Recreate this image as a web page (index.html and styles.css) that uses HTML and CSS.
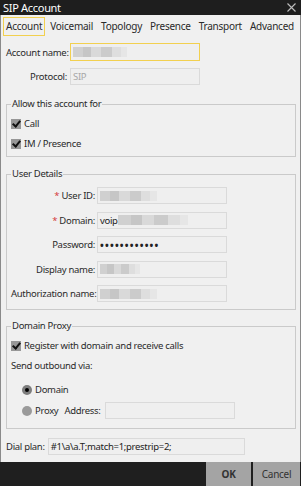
FILE: index.html
```html
<!DOCTYPE html>
<html lang="en">
<head>
  <meta charset="UTF-8">
  <title>SIP Account</title>
  <link rel="stylesheet" href="styles.css">
</head>
<body>
  <div class="window">
    <div class="titlebar">
      <span>SIP Account</span>
      <svg class="close" width="9" height="9" viewBox="0 0 9 9"><path d="M0.5 0.5L8.5 8.5M8.5 0.5L0.5 8.5" stroke="#bdbdbd" stroke-width="1.1"/></svg>
    </div>

    <div class="main">
      <nav class="tabs">
        <span class="tab active">Account</span>
        <span class="tab">Voicemail</span>
        <span class="tab">Topology</span>
        <span class="tab">Presence</span>
        <span class="tab">Transport</span>
        <span class="tab">Advanced</span>
      </nav>

      <div class="content">
        <div class="row">
          <label class="lbl lbl-top">Account name:</label>
          <div class="field focus"><span class="smudge sm-acc"></span></div>
        </div>
        <div class="row row-protocol">
          <label class="lbl lbl-top">Protocol:</label>
          <div class="field muted">SIP</div>
        </div>

        <fieldset class="group group-allow">
          <legend>Allow this account for</legend>
          <div class="check"><span class="box"></span>Call</div>
          <div class="check"><span class="box"></span>IM / Presence</div>
        </fieldset>

        <fieldset class="group group-user">
          <legend>User Details</legend>
          <div class="row">
            <label class="lbl lbl-user"><span class="req">*</span> User ID:</label>
            <div class="field"><span class="smudge sm-uid"></span></div>
          </div>
          <div class="row">
            <label class="lbl lbl-user"><span class="req">*</span> Domain:</label>
            <div class="field">voip<span class="smudge sm-dom"></span></div>
          </div>
          <div class="row">
            <label class="lbl lbl-user">Password:</label>
            <div class="field dots">••••••••••••</div>
          </div>
          <div class="row">
            <label class="lbl lbl-user">Display name:</label>
            <div class="field"><span class="smudge sm-disp"></span></div>
          </div>
          <div class="row">
            <label class="lbl lbl-user">Authorization name:</label>
            <div class="field"><span class="smudge sm-auth"></span></div>
          </div>
        </fieldset>

        <fieldset class="group group-proxy">
          <legend>Domain Proxy</legend>
          <div class="check"><span class="box"></span>Register with domain and receive calls</div>
          <div class="plain">Send outbound via:</div>
          <div class="radio-row radio-domain"><span class="radio on"></span>Domain</div>
          <div class="radio-row radio-proxy">
            <span class="radio"></span>Proxy
            <span class="addr">Address:</span>
            <div class="field"></div>
          </div>
        </fieldset>

        <div class="row row-dial">
          <label class="lbl">Dial plan:</label>
          <div class="field dial">#1\a\a.T;match=1;prestrip=2;</div>
        </div>
      </div>
    </div>

    <div class="footer">
      <button class="ok">OK</button>
      <button class="cancel">Cancel</button>
    </div>
  </div>
</body>
</html>
```

FILE: styles.css
```css
body {
  margin: 0;
  font-family: "Noto Sans", sans-serif;
  font-size: 9.5px;
  letter-spacing: -0.3px;
  color: #2a2a2a;
  background: #f0f0f0;
}

.window {
  width: 301px;
  height: 486px;
  display: flex;
  flex-direction: column;
  background: #f0f0f0;
}

.titlebar {
  height: 15px;
  background: #1e1e1e;
  color: #fff;
  font-size: 11px;
  display: flex;
  align-items: center;
  justify-content: space-between;
  padding: 0 5px 0 3px;
}
.close {
  display: block;
}

.main {
  flex: 1;
  border-left: 1px solid #8a8a8a;
  border-right: 1px solid #8a8a8a;
}

.tabs {
  display: flex;
  height: 22px;
  box-sizing: border-box;
  padding: 2px 0 0 2px;
  font-size: 10px;
  letter-spacing: -0.25px;
  gap: 2px;
  white-space: nowrap;
}
.tab {
  height: 19px;
  box-sizing: border-box;
  line-height: 17px;
  padding: 0 2px;
  border: 1px solid transparent;
}
.tab.active {
  border-color: #f2d04f;
}

.content {
  padding: 6px 4px 0 5px;
}

.row {
  display: flex;
  align-items: center;
  height: 18px;
}
.lbl {
  white-space: nowrap;
  margin-right: 3px;
}
.lbl-top {
  width: 61px;
  text-align: right;
}
.lbl-top:first-child {
  text-align: left;
}
.row-protocol {
  margin-top: 7px;
  height: 17px;
}
.row-protocol .lbl {
  text-align: right;
}

.field {
  width: 130px;
  height: 100%;
  box-sizing: border-box;
  border: 1px solid #dadada;
  background: #efefef;
  display: flex;
  align-items: center;
  padding-left: 2px;
  color: #222;
}
.field.focus {
  border-color: #f2d04f;
}
.field.muted {
  color: #a8a8a8;
}
.field.dots {
  letter-spacing: 1.2px;
  font-size: 10px;
  font-weight: bold;
}

.smudge {
  height: 10px;
  background: linear-gradient(90deg, #d0d0d0 0 18%, #c6c6c6 18% 34%, #d9d9d9 34% 52%, #cbcbcb 52% 72%, #dedede 72% 88%, #e6e6e6 88%);
}
.sm-acc { width: 54px; }
.sm-uid { width: 57px; }
.sm-dom { width: 70px; }
.sm-disp { width: 40px; }
.sm-auth { width: 57px; }

.group {
  margin: 13px 0 0;
  padding: 5px 4px 4px;
  border: 1px solid #cacaca;
  min-width: 0;
}
.group legend {
  padding: 0 1px;
  line-height: 12px;
}
.group-allow {
  display: flex;
  flex-direction: column;
  gap: 3px;
}
.group-user {
  margin-top: 11px;
  padding-top: 7px;
  padding-bottom: 7px;
  display: flex;
  flex-direction: column;
  gap: 7.5px;
}
.group-user .row {
  height: 17px;
}
.lbl-user {
  width: 84px;
  text-align: right;
  margin-right: 2px;
}
.req {
  color: #d43a3a;
}

.check {
  display: flex;
  align-items: center;
  gap: 3px;
  height: 17px;
}
.box {
  width: 10px;
  height: 10px;
  background: #979797;
  position: relative;
}
.box::after {
  content: "";
  position: absolute;
  left: 3px;
  top: 0px;
  width: 3px;
  height: 6px;
  border: solid #111;
  border-width: 0 2px 2px 0;
  transform: rotate(40deg);
}

.group-proxy {
  margin-top: 10px;
  padding-bottom: 9px;
}
.plain {
  height: 17px;
  line-height: 17px;
  margin-top: 3px;
}
.radio-row {
  display: flex;
  align-items: center;
  gap: 3px;
  height: 17px;
  padding-left: 11px;
}
.radio-domain {
  margin-top: 7px;
}
.radio-proxy {
  margin-top: 4px;
}
.radio {
  width: 10px;
  height: 10px;
  border-radius: 50%;
  background: #9a9a9a;
  position: relative;
}
.radio.on {
  background: #7d7d7d;
}
.radio.on::after {
  content: "";
  position: absolute;
  left: 3px;
  top: 3px;
  width: 4px;
  height: 4px;
  border-radius: 50%;
  background: #000;
}
.addr {
  margin-left: 3px;
  margin-right: 1px;
}

.row-dial {
  margin-top: 9px;
  height: 17px;
}
.field.dial {
  width: 197px;
}

.footer {
  height: 24px;
  background: #1f1f1f;
  display: flex;
  justify-content: flex-end;
  gap: 2px;
  padding-right: 1px;
}
.footer button {
  border: none;
  background: #a4a4a4;
  font-family: "Noto Sans", sans-serif;
  font-size: 10px;
  letter-spacing: -0.3px;
  padding: 0;
  color: #333;
}
.ok {
  width: 45px;
  font-weight: bold;
  color: #111;
}
.cancel {
  width: 47px;
}
```
